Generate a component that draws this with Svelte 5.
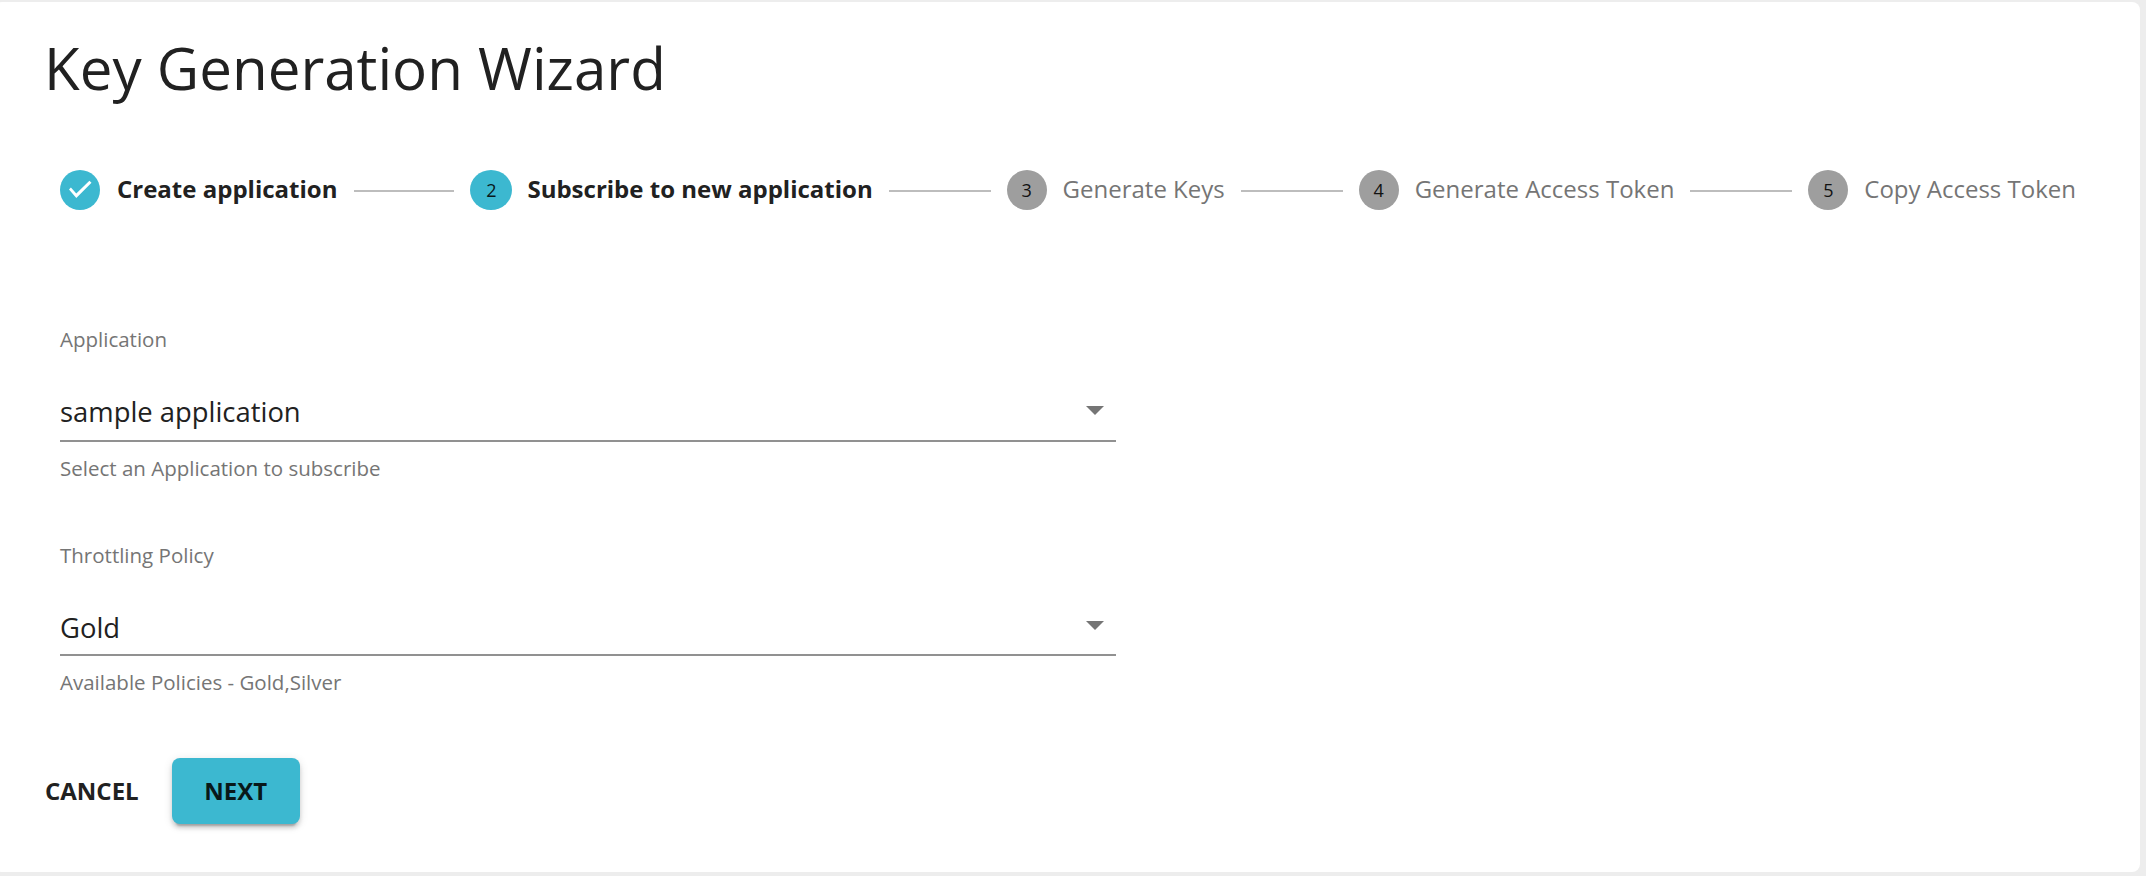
<script>
  const steps = [
    { label: 'Create application', state: 'done' },
    { label: 'Subscribe to new application', state: 'active' },
    { label: 'Generate Keys', state: 'todo' },
    { label: 'Generate Access Token', state: 'todo' },
    { label: 'Copy Access Token', state: 'todo' }
  ];
  const fields = [
    { label: 'Application', value: 'sample application', help: 'Select an Application to subscribe' },
    { label: 'Throttling Policy', value: 'Gold', help: 'Available Policies - Gold,Silver' }
  ];
</script>

<main class="card">
  <h1>Key Generation Wizard</h1>

  <div class="stepper">
    {#each steps as step, i}
      {#if i > 0}<span class="connector" class:first={i === 1}></span>{/if}
      <div class="step {step.state}">
        {#if step.state === 'done'}
          <svg class="icon" viewBox="0 0 40 40">
            <circle cx="20" cy="20" r="20" />
            <path class="tick" d="M9 19.5l1.9-1.9 5.4 5.9L29.4 10.7l2.1 2.1L16.3 28z" />
          </svg>
        {:else}
          <span class="icon badge">{i + 1}</span>
        {/if}
        <span class="label">{step.label}</span>
      </div>
    {/each}
  </div>

  <form class="fields">
    {#each fields as field}
      <div class="field">
        <span class="caption">{field.label}</span>
        <div class="select">
          <span class="value">{field.value}</span>
          <svg class="arrow" viewBox="0 0 18 9"><path d="M0 0h18L9 9z" /></svg>
        </div>
        <span class="help">{field.help}</span>
      </div>
    {/each}
  </form>

  <div class="actions">
    <button class="cancel">CANCEL</button>
    <button class="next">NEXT</button>
  </div>
</main>

<style>
  :global(body) {
    background: #ededed;
    overflow: hidden;
  }
  .card {
    box-sizing: border-box;
    width: 2146px;
    height: 870px;
    margin: 2px 0 4px -6px;
    padding: 31px 64px 0 50px;
    border-radius: 8px;
    background: #fff;
    color: #212121;
    font-family: 'Open Sans', sans-serif;
  }
  h1 {
    margin: 0;
    font-size: 58.3px;
    font-weight: 400;
    line-height: 70px;
  }
  .stepper {
    display: flex;
    align-items: center;
    gap: 16px;
    height: 40px;
    margin: 67px 0 0 16px;
  }
  .connector {
    flex: 1;
    height: 2px;
    margin-top: 2px;
    background: #bdbdbd;
  }
  .connector.first {
    flex: 0 0 100px;
  }
  .step {
    display: flex;
    align-items: center;
    gap: 16px;
    color: #757575;
  }
  .icon {
    width: 40px;
    height: 40px;
    fill: #3cb8d0;
  }
  .tick {
    fill: #fff;
  }
  .badge {
    display: flex;
    align-items: center;
    justify-content: center;
    border-radius: 50%;
    background: #9e9e9e;
    color: #121212;
    font-size: 18px;
  }
  .active .badge {
    width: 42px;
    margin-right: -1px;
    background: #3cb8d0;
    color: #08181b;
  }
  .label {
    margin-top: -2px;
    font-size: 24px;
    line-height: 34px;
    white-space: nowrap;
  }
  .done .label,
  .active .label {
    color: #212121;
    font-weight: 700;
  }
  .done .label {
    margin-left: 1px;
    margin-right: 1px;
  }
  .fields {
    display: flex;
    flex-direction: column;
    width: 1056px;
    margin: 114px 0 0 16px;
  }
  .field {
    display: flex;
    flex-direction: column;
    height: 216px;
  }
  .caption,
  .help {
    color: #757575;
    font-size: 20.5px;
    line-height: 30px;
  }
  .select {
    display: flex;
    align-items: center;
    justify-content: space-between;
    box-sizing: border-box;
    height: 58px;
    margin-top: 30px;
    padding: 0 12px 3px 0;
    border-bottom: 2px solid #919191;
    font-size: 27.4px;
  }
  .field:last-child {
    height: 215px;
  }
  .field:last-child .select {
    height: 57px;
    margin-top: 29px;
    padding-bottom: 2px;
  }
  .value {
    margin-top: 2px;
  }
  .field:last-child .value {
    margin-top: 4px;
  }
  .arrow {
    width: 18px;
    height: 9px;
    fill: #757575;
  }
  .help {
    margin-top: 11px;
  }
  .actions {
    display: flex;
    gap: 33px;
    margin-top: 3px;
  }
  button {
    height: 66px;
    padding: 0;
    border: 0;
    background: none;
    color: #212121;
    font: 700 24px/66px 'Open Sans', sans-serif;
  }
  .cancel {
    padding-left: 1px;
  }
  .next {
    width: 128px;
    border-radius: 8px;
    background: #3cb8d0;
    color: #081819;
    box-shadow: 0 6px 2px -4px rgba(0, 0, 0, 0.2), 0 4px 4px 0 rgba(0, 0, 0, 0.14), 0 2px 10px 0 rgba(0, 0, 0, 0.12);
  }
</style>
